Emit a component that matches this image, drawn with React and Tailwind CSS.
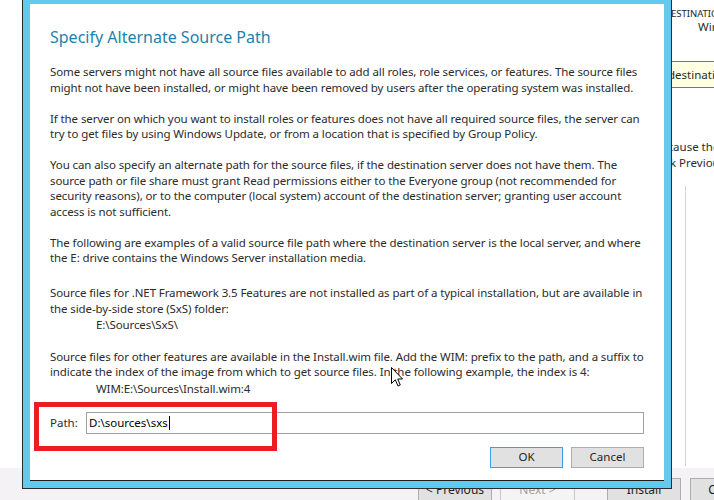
import React from "react";

const paragraphs = [
  {
    lines: [
      "Some servers might not have all source files available to add all roles, role services, or features. The source files",
      "might not have been installed, or might have been removed by users after the operating system was installed.",
    ],
  },
  {
    lines: [
      "If the server on which you want to install roles or features does not have all required source files, the server can",
      "try to get files by using Windows Update, or from a location that is specified by Group Policy.",
    ],
  },
  {
    lines: [
      "You can also specify an alternate path for the source files, if the destination server does not have them. The",
      "source path or file share must grant Read permissions either to the Everyone group (not recommended for",
      "security reasons), or to the computer (local system) account of the destination server; granting user account",
      "access is not sufficient.",
    ],
  },
  {
    lines: [
      "The following are examples of a valid source file path where the destination server is the local server, and where",
      "the E: drive contains the Windows Server installation media.",
    ],
  },
  {
    gap: "mt-[19.5px]",
    lines: [
      "Source files for .NET Framework 3.5 Features are not installed as part of a typical installation, but are available in",
      "the side-by-side store (SxS) folder:",
      { indent: true, text: "E:\\Sources\\SxS\\" },
    ],
  },
  {
    lines: [
      "Source files for other features are available in the Install.wim file. Add the WIM: prefix to the path, and a suffix to",
      "indicate the index of the image from which to get source files. In the following example, the index is 4:",
      { indent: true, text: "WIM:E:\\Sources\\Install.wim:4" },
    ],
  },
];

const WizardButton = ({ children, disabled, className = "" }) => (
  <div
    className={`h-[24px] flex items-center justify-center border text-[12px] ${
      disabled
        ? "bg-[#f4f4f4] border-[#c8c8c8] text-[#a0a0a0]"
        : "bg-[#e1e1e1] border-[#adadad] text-[#1e1e1e]"
    } ${className}`}
  >
    {children}
  </div>
);

const Cursor = () => (
  <svg
    width="14"
    height="22"
    viewBox="0 0 14 22"
    className="absolute left-[390px] top-[366px]"
  >
    <path
      d="M1.5 1.5 L1.5 17.5 L5.3 13.8 L8 20 L10.3 19 L7.7 13 L12.5 13 Z"
      fill="#fff"
      stroke="#000"
      strokeWidth="1"
    />
  </svg>
);

export default function App() {
  return (
    <div
      className="relative w-[714px] h-[500px] overflow-hidden bg-white text-[#2b2b2b]"
      style={{ fontFamily: '"Noto Sans", "Open Sans", sans-serif' }}
    >
      {/* wizard window behind the dialog */}
      <div className="flex h-full">
        <div className="w-[2px] bg-[#6e7579]" />
        <div className="w-[6px] bg-[#c5d6dd]" />
        <div className="flex-1 flex flex-col">
          <div className="flex-1 bg-white pl-[656px] relative overflow-hidden">
            <div className="pt-[7px] pl-[8px] text-[9.5px] leading-[13px] whitespace-nowrap text-[#1e1e1e]">
              DESTINATION SERVER
            </div>
            <div className="pl-[42px] text-[11.5px] leading-[14px] whitespace-nowrap">
              WinSrv
            </div>
            <div className="mt-[27px] h-[27px] border border-[#767676] bg-[#ffffe1] flex items-center pl-[11px] text-[11.5px] whitespace-nowrap">
              destination server
            </div>
            <div className="mt-[51px] -ml-[2px] text-[11.5px] leading-[15.5px] whitespace-nowrap">
              <div>because they</div>
              <div className="-ml-[1px]">click Previous</div>
            </div>
            <div className="ml-[29px] mt-[16px] w-px h-[280px] bg-[#d4d4d4]" />
          </div>
          <div className="h-[32px] bg-[#f5f2f5] flex items-start pt-[10px] pl-[418px]">
            <WizardButton className="w-[74px]">&lt; Previous</WizardButton>
            <WizardButton disabled className="w-[75px] ml-[8px]">
              Next &gt;
            </WizardButton>
            <WizardButton className="w-[74px] ml-[32px]">Install</WizardButton>
            <WizardButton className="w-[74px] ml-[9px]">Cancel</WizardButton>
          </div>
        </div>
      </div>

      {/* modal dialog */}
      <div className="absolute left-[22px] top-0 w-[650px] h-[489px] bg-[#62c9ef] border-x border-b border-[#2b2b2b] pt-[4px] pl-[7px] pr-[7px] pb-[7px]">
        <div className="h-full bg-white border-b border-[#1e1e1e] pl-[20px] flex flex-col">
          <div className="mt-[23px] text-[16px] leading-[20px] text-[#1f7fae]">
            Specify Alternate Source Path
          </div>
          <div className="mt-[17px] text-[11.5px] tracking-[-0.1px] leading-[15.5px] whitespace-nowrap">
            {paragraphs.map((p, i) => (
              <div key={i} className={i === 0 ? "" : p.gap || "mt-[15.5px]"}>
                {p.lines.map((line, j) =>
                  typeof line === "string" ? (
                    <div key={j}>{line}</div>
                  ) : (
                    <div key={j} className="pl-[46px] leading-[17px]">
                      {line.text}
                    </div>
                  )
                )}
              </div>
            ))}
          </div>
          <div className="mt-[15px] flex items-center">
            <span className="text-[11.5px] w-[36px]">Path:</span>
            <div className="w-[558px] h-[22px] border border-[#a0a0a0] flex items-center pl-[2px] text-[11.5px] text-[#000]">
              D:\sources\sxs
              <span className="inline-block w-px h-[14px] bg-black ml-px" />
            </div>
          </div>
          <div className="mt-[13px] flex pl-[440px] gap-[8px]">
            <div className="w-[73px] h-[21px] bg-[#e1e1e1] border border-[#3c9fe6] flex items-center justify-center text-[11.5px] text-[#1e1e1e]">
              OK
            </div>
            <div className="w-[73px] h-[21px] bg-[#e1e1e1] border border-[#adadad] flex items-center justify-center text-[11.5px] text-[#1e1e1e]">
              Cancel
            </div>
          </div>
        </div>
      </div>

      {/* red highlight annotation */}
      <div className="absolute left-[34px] top-[402px] w-[243px] h-[49px] border-[5px] border-[#ed1c24]" />

      <Cursor />
    </div>
  );
}
